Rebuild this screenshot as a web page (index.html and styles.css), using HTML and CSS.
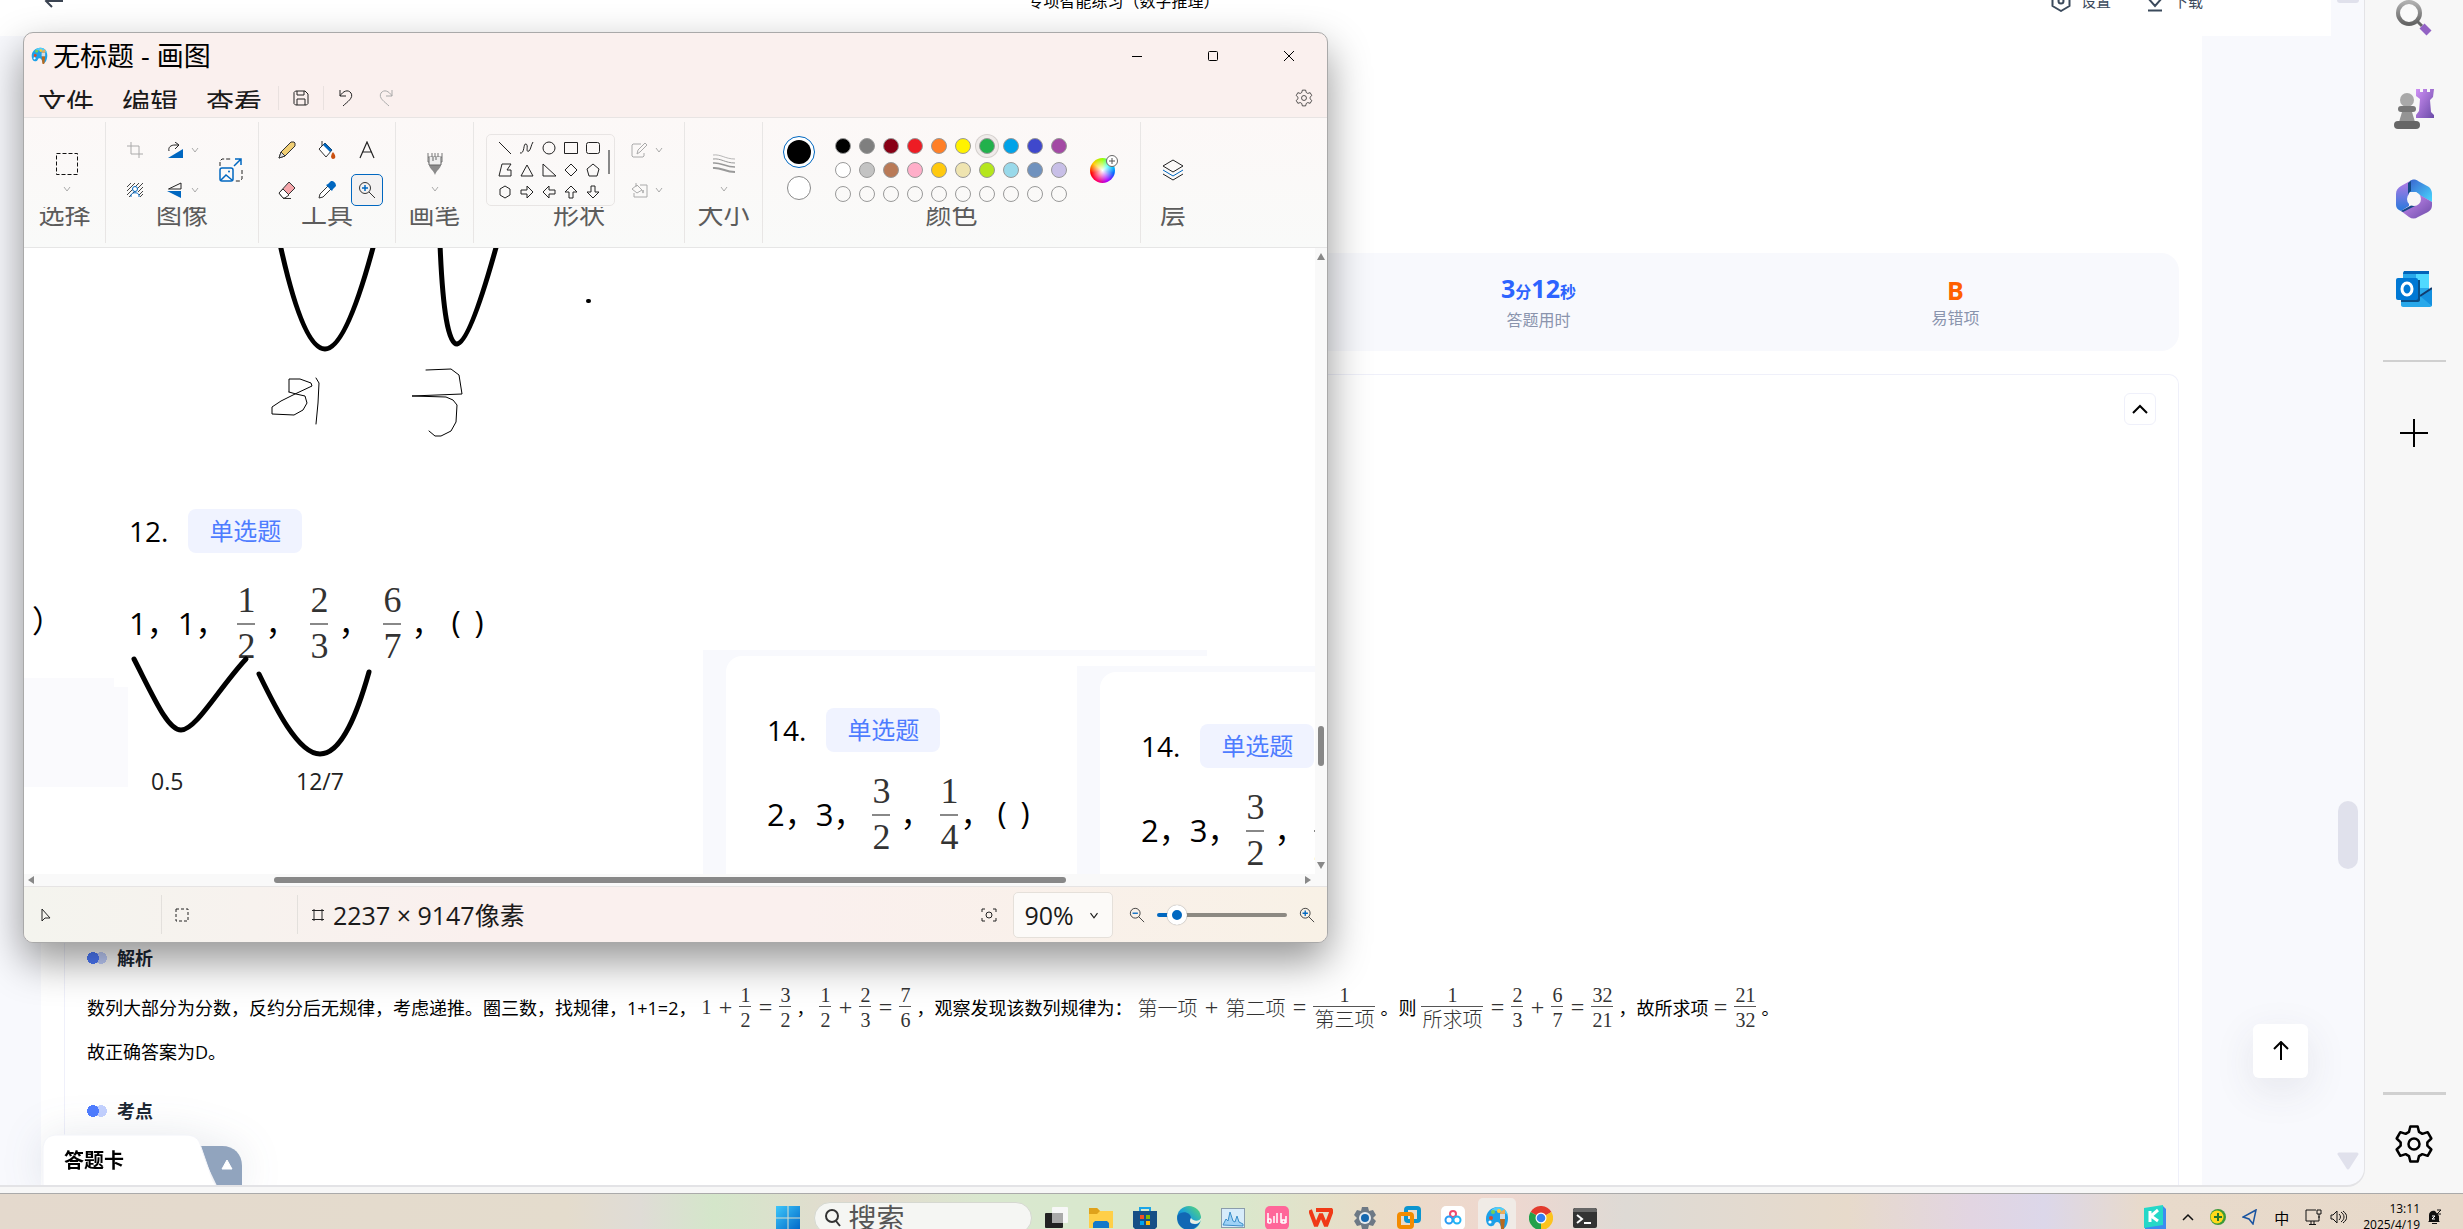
FILE: index.html
```html
<!DOCTYPE html>
<html lang="zh-CN">
<head>
    <meta charset="UTF-8">
    <meta name="viewport" content="width=device-width, initial-scale=1.0">
    <title>专项智能练习（数字推理）</title>
    <link rel="stylesheet" href="styles.css">
</head>
<body>
    <!-- gradients and icons used more than once -->
    <svg class="defs" aria-hidden="true">
        <defs>
            <linearGradient id="gGray" x1="0" y1="0" x2="0" y2="1"><stop offset="0" stop-color="#b0b0b0"/><stop offset="1" stop-color="#636363"/></linearGradient>
            <linearGradient id="gPurple" x1="0" y1="0" x2="1" y2="1"><stop offset="0" stop-color="#cf90f5"/><stop offset="1" stop-color="#6b4ba8"/></linearGradient>
            <linearGradient id="gBlue" x1="0" y1="0" x2="1" y2="1"><stop offset="0" stop-color="#3a64cf"/><stop offset="1" stop-color="#48d8ff"/></linearGradient>
            <linearGradient id="gViolet" x1="0" y1="0" x2="0" y2="1"><stop offset="0" stop-color="#b67be6"/><stop offset="1" stop-color="#2679dc"/></linearGradient>
            <linearGradient id="gWin" x1="0" y1="0" x2="1" y2="1"><stop offset="0" stop-color="#3ec7fa"/><stop offset="1" stop-color="#0067c8"/></linearGradient>
            <linearGradient id="gEdge" x1="0" y1="1" x2="1" y2="0"><stop offset="0" stop-color="#0c59a4"/><stop offset=".5" stop-color="#1ba1d8"/><stop offset="1" stop-color="#5fdc6c"/></linearGradient>
        </defs>
        <symbol id="chev" viewBox="0 0 8 6"><path d="M1 1l3 4 3-4" fill="none" stroke="currentColor"/></symbol>
        <symbol id="palette" viewBox="0 0 24 24">
            <path d="M13 1C6 1 1 6 1 13c0 5 3 8 6 7 3 0 2-4 5-4 4 0 3 6 6 7 3-1 5-6 5-11 0-6-4-11-10-11z" fill="#1ca0e8"/>
            <path d="M13 1c5 0 9 3 10 8-4-3-10-5-17-4 2-3 4-4 7-4z" fill="#54cdf7"/>
            <circle cx="6" cy="12" r="2" fill="#d84a2b"/><circle cx="8" cy="6" r="2" fill="#73cf55"/><circle cx="14" cy="5" r="2" fill="#ffc83a"/><circle cx="5" cy="16" r="1.600" fill="#fff"/>
            <path d="M15 13h5l-1 10c-1 2-3 1-3 0z" fill="#b86a20"/><path d="M15 8h5v5h-5z" fill="#d7dde2"/><path d="M15 8c0-3 4-4 5-5v5z" fill="#ecab5a"/>
        </symbol>
        <symbol id="gear" viewBox="0 0 24 24">
            <path d="M9.800 1.500h4.400l.8 3.200 2 1.200 3.200-1 2.200 3.800-2.400 2.300v2l2.400 2.300-2.200 3.800-3.200-1-2 1.200-.8 3.200H9.800L9 19.300l-2-1.200-3.200 1-2.200-3.800L4 13v-2L1.600 8.700l2.200-3.800 3.200 1 2-1.200z" fill="none" stroke="currentColor" stroke-linejoin="round"/>
            <circle cx="12" cy="12" r="3.300" fill="none" stroke="currentColor"/>
        </symbol>
        <symbol id="magPlus" viewBox="0 0 18 18"><circle cx="7" cy="7" r="5.500" fill="none" stroke="#333"/><path d="M11 11l6 6" stroke="#333"/><path d="M4 7h6M7 4v6" stroke="#0067c0" stroke-width="1.500"/></symbol>
        <symbol id="magMinus" viewBox="0 0 18 18"><circle cx="7" cy="7" r="5.500" fill="none" stroke="#333"/><path d="M11 11l6 6" stroke="#333"/><path d="M4 7h6" stroke="#0067c0" stroke-width="1.500"/></symbol>
    </svg>

    <div class="browser">
        <main class="page">
            <header class="page-header">
                <div class="header-inner">
                    <a href="#" class="back" aria-label="返回"><svg width="20" height="14" viewBox="0 0 20 14"><path d="M8 1L2 7l6 6M2 7h17" fill="none" stroke="#3b4452" stroke-width="2"/></svg></a>
                    <h1>专项智能练习（数字推理）</h1>
                    <div class="header-tools">
                        <a href="#"><svg width="20" height="22" viewBox="0 0 20 22"><path d="M10 1l8.500 5v10L10 21l-8.500-5V6z" fill="none" stroke="#3b4a5c" stroke-width="2" stroke-linejoin="round"/><circle cx="10" cy="11" r="2.500" fill="none" stroke="#3b4a5c" stroke-width="2"/></svg>设置</a>
                        <a href="#"><svg width="16" height="22" viewBox="0 0 16 22"><path d="M5 2h6v6h4l-7 8-7-8h4zM1 20.500h14" fill="none" stroke="#3b4a5c" stroke-width="2"/></svg>下载</a>
                    </div>
                </div>
            </header>

            <section class="content">
                <div class="stats">
                    <div class="stat stat-time"><strong>3<small>分</small>12<small>秒</small></strong><span>答题用时</span></div>
                    <div class="stat stat-wrong"><strong>B</strong><span>易错项</span></div>
                </div>

                <article class="analysis">
                    <div class="analysis-top">
                        <button class="fold" aria-label="收起"><svg width="16" height="10" viewBox="0 0 16 10"><path d="M1 9l7-7 7 7" fill="none" stroke="#000" stroke-width="2"/></svg></button>
                    </div>
                    <h2><i class="dots"></i>解析</h2>
                    <p class="line">
                        <span>数列大部分为分数，反约分后无规律，考虑递推。圈三数，找规律，1+1=2，</span>
                        <span class="math">1<b>+</b><span class="frac"><i>1</i><i>2</i></span><b>=</b><span class="frac"><i>3</i><i>2</i></span></span>
                        <span>，</span>
                        <span class="math"><span class="frac"><i>1</i><i>2</i></span><b>+</b><span class="frac"><i>2</i><i>3</i></span><b>=</b><span class="frac"><i>7</i><i>6</i></span></span>
                        <span>，观察发现该数列规律为：</span>
                        <span class="math">第一项<b>+</b>第二项<b>=</b><span class="frac"><i>1</i><i>第三项</i></span></span>
                        <span>。则</span>
                        <span class="math"><span class="frac"><i>1</i><i>所求项</i></span><b>=</b><span class="frac"><i>2</i><i>3</i></span><b>+</b><span class="frac"><i>6</i><i>7</i></span><b>=</b><span class="frac"><i>32</i><i>21</i></span></span>
                        <span>，故所求项</span>
                        <span class="math last"><b>=</b><span class="frac"><i>21</i><i>32</i></span></span>
                        <span>。</span>
                    </p>
                    <p class="answer">故正确答案为D。</p>
                    <h2><i class="dots"></i>考点</h2>
                </article>
            </section>

            <button class="sheet">
                <svg width="202" height="54" viewBox="0 0 202 54"><path d="M156 12h24c12 0 20 8 20 20v22h-24z" fill="#91a4be"/><path d="M1 54V16C1 6 6 1 15 1h128c10 0 14 4 16 12l10 29c3 8 5 10 9 12z" fill="#fff" stroke="#f3f4f9"/><path d="M185 26l5 9h-10z" fill="#fff" stroke="#fff" stroke-linejoin="round"/></svg>
                <span>答题卡</span>
            </button>
            <button class="to-top" aria-label="回到顶部"><svg width="16" height="20" viewBox="0 0 16 20"><path d="M8 19V2M1 8l7-7 7 7" fill="none" stroke="#000" stroke-width="2"/></svg></button>
            <div class="page-scroll"><i class="cap"></i><i class="thumb"></i><svg width="22" height="18" viewBox="0 0 22 18"><path d="M2 2h18l-9 14z" fill="#e0e1ec" stroke="#e0e1ec" stroke-width="3" stroke-linejoin="round"/></svg></div>
        </main>

        <aside class="sidebar">
            <button aria-label="搜索"><svg width="38" height="40" viewBox="0 0 38 40"><circle cx="14" cy="14" r="11" fill="#fafafa" stroke="url(#gGray)" stroke-width="4"/><path d="M22 22l5 5" stroke="#666" stroke-width="3"/><path d="M27 27l7 7" stroke="#9262c4" stroke-width="7"/></svg></button>
            <button aria-label="游戏"><svg width="40" height="40" viewBox="0 0 40 40"><path d="M22 0h4v3h3V0h4v3h3V0h4l-1 8-3 3 1 12 3 3v3H22v-3l3-4 1-12-4-3z" fill="url(#gPurple)"/><circle cx="13" cy="11" r="7" fill="#a9a9a9"/><rect x="4" y="17" width="18" height="6" rx="3" fill="#777"/><path d="M8 23h10l3 10H5z" fill="#949494"/><rect y="32" width="26" height="8" rx="4" fill="#666"/></svg></button>
            <button aria-label="Microsoft 365"><svg width="36" height="40" viewBox="0 0 36 40"><path d="M14 2l-9 5c-3 2-5 4-5 8v11c0 3 2 5 5 6l8-5V8z" fill="url(#gViolet)"/><path d="M14 2c2-2 6-2 8 0l11 6c2 2 3 4 3 7v8L25 17l-5-4h-7V4z" fill="url(#gBlue)"/><path d="M5 32l13-7 6-9 12 7v3c0 3-1 5-4 7l-10 5c-3 2-6 2-9 0z" fill="url(#gPurple)"/><path d="M12 4l3-2v10l-3 3zM5 32l11-6 3 1-12 6z" fill="#144a86"/><circle cx="18" cy="20" r="7" fill="#f7f7f7"/></svg></button>
            <button aria-label="Outlook"><svg width="36" height="36" viewBox="0 0 36 36"><path d="M7 2c0-1 1-2 2-2h22c1 0 2 1 2 2v16l3 2v14c0 1-1 2-2 2H7c-1 0-2-1-2-2V8h2z" fill="#28a8ea"/><path d="M8 0h25v3H7z" fill="#0364b8"/><path d="M20 3h13v14H20z" fill="#50d9ff"/><path d="M24 25l12-8v18z" fill="#1490df"/><path d="M24 25l12-8" stroke="#123b6d" stroke-width="2"/><path d="M4 9h20v20c0 1-1 2-2 2H5z" fill="#0a4f87"/><rect y="7" width="22" height="22" rx="2" fill="#0078d4"/><ellipse cx="11" cy="18" rx="5" ry="6" fill="none" stroke="#fff" stroke-width="3"/></svg></button>
            <hr>
            <button aria-label="添加"><svg width="28" height="28" viewBox="0 0 28 28"><path d="M14 0v28M0 14h28" stroke="#000" stroke-width="2"/></svg></button>
            <hr class="low">
            <button class="settings" aria-label="设置"><svg width="40" height="40"><use href="#gear"/></svg></button>
        </aside>
    </div>

    <section class="paint">
        <div class="titlebar">
            <svg width="17" height="17"><use href="#palette"/></svg>
            <span class="win-title">无标题 - 画图</span>
            <div class="win-buttons">
                <button aria-label="最小化"><svg width="12" height="12"><path d="M1 6.500h10" stroke="#000"/></svg></button>
                <button aria-label="最大化"><svg width="12" height="12"><rect x="1.500" y="1.500" width="9" height="9" rx="1" fill="none" stroke="#000"/></svg></button>
                <button aria-label="关闭"><svg width="12" height="12"><path d="M1 1l10 10M11 1L1 11" stroke="#000"/></svg></button>
            </div>
        </div>
        <nav class="menubar">
            <button class="menu">文件</button>
            <button class="menu">编辑</button>
            <button class="menu">查看</button>
            <button class="quick bar" aria-label="保存"><svg width="16" height="16" viewBox="0 0 16 16"><path d="M1 2.500L2.500 1H12l3 3v9.500L13.500 15h-11L1 13.500zM4 1v4h7V1M4 15V9h8v6" fill="none" stroke="#222"/></svg></button>
            <button class="quick bar" aria-label="撤消"><svg width="16" height="18" viewBox="0 0 16 18"><path d="M2 1v6h6M2 7c3-5 8-7 11-3 3 5-4 9-8 13" fill="none" stroke="#222"/></svg></button>
            <button class="quick" aria-label="重做"><svg width="16" height="18" viewBox="0 0 16 18"><path d="M14 1v6H8M14 7C11 2 6 0 3 4c-3 5 4 9 8 13" fill="none" stroke="#aaa"/></svg></button>
            <button class="quick cog" aria-label="设置"><svg width="18" height="18"><use href="#gear"/></svg></button>
        </nav>

        <div class="ribbon">
            <div class="group g-select">
                <div class="tools col">
                    <button aria-label="选择"><svg width="24" height="24"><rect x="1.500" y="1.500" width="21" height="21" fill="none" stroke="#111" stroke-dasharray="4 2"/></svg></button>
                    <svg class="chev" width="8" height="6"><use href="#chev"/></svg>
                </div>
                <span class="label">选择</span>
            </div>
            <div class="group g-image">
                <div class="tools">
                    <div class="pad3">
                        <button aria-label="裁剪"><svg width="16" height="16" viewBox="0 0 16 16"><path d="M4 0v12h12M0 4h12v12" fill="none" stroke="#aaa"/></svg></button>
                        <button aria-label="旋转"><svg width="16" height="16" viewBox="0 0 16 16"><path d="M16 7v9H1z" fill="#0067c0"/><path d="M2 9c-1-4 2-6 6-6h3M8 0l4 3-4 4" fill="none" stroke="#222"/></svg></button>
                        <svg class="chev" width="8" height="6"><use href="#chev"/></svg>
                        <button aria-label="删除背景"><svg width="16" height="14" viewBox="0 0 16 14"><path d="M0 4l4-4M0 8l8-8M0 12L12 0M2 14L16 0M11 9l5-5M12 12l4-4M13 14l3-3" stroke="#444"/><circle cx="8" cy="6" r="2.500" fill="#fff" stroke="#0067c0"/><path d="M4 14v-2c1-3 7-3 8 0v2" fill="#fff" stroke="#0067c0"/></svg></button>
                        <button aria-label="翻转"><svg width="16" height="16" viewBox="0 0 16 16"><path d="M1.500 7L14 1v6z" fill="none" stroke="#222"/><path d="M0 9h14v7z" fill="#0067c0"/></svg></button>
                        <svg class="chev" width="8" height="6"><use href="#chev"/></svg>
                    </div>
                    <button aria-label="重设大小"><svg width="24" height="24" viewBox="0 0 24 24"><path d="M1 8V3l2-2h9M23 12v9l-2 2h-6" fill="none" stroke="#222" stroke-dasharray="4 2"/><rect x="1" y="10" width="13" height="13" rx="2" fill="none" stroke="#0067c0" stroke-width="1.500"/><path d="M2 22l5-5 6 5M15 8l7-7M16 1h6v6" fill="none" stroke="#0067c0" stroke-width="1.500"/><circle cx="10" cy="13.500" r="1" fill="#0067c0"/></svg></button>
                </div>
                <span class="label">图像</span>
            </div>
            <div class="group g-tools">
                <div class="tools">
                    <div class="pad">
                        <button aria-label="铅笔"><svg width="18" height="18" viewBox="0 0 18 18"><path d="M1 17l2-6L13 1h3l1 1v3L7 15z" fill="#f1cf74" stroke="#333"/><path d="M1 17l2-6 4 4z" fill="#ddd" stroke="#333"/></svg></button>
                        <button aria-label="填充"><svg width="18" height="18" viewBox="0 0 18 18"><path d="M7 2l7 7-6 7-7-8z" fill="#fff" stroke="#333"/><path d="M7 2l7 7-2 2-7-7z" fill="#0067c0"/><path d="M4 5V0" stroke="#333"/><path d="M15 11c4 5 2 7 0 7s-3-3 0-7z" fill="#ca5010"/></svg></button>
                        <button aria-label="文本"><svg width="16" height="18" viewBox="0 0 16 18"><path d="M1 17L8 1l7 16M3 11h10" fill="none" stroke="#222" stroke-width="1.200"/></svg></button>
                        <button aria-label="橡皮擦"><svg width="18" height="18" viewBox="0 0 18 18"><path d="M1 12L11 1l6 6L7 17H5z" fill="#f6a6ab" stroke="#333"/><path d="M1 12l4-4 6 6-4 3H5z" fill="#fff" stroke="#333"/><path d="M5 17.500h8" stroke="#333"/></svg></button>
                        <button aria-label="取色器"><svg width="18" height="18" viewBox="0 0 18 18"><path d="M1 17l1-4 8-8 3 3-8 8z" fill="#fff" stroke="#333"/><path d="M8 4l2-1 3-3c3 0 5 2 5 5l-3 3-1 2z" fill="#0067c0"/></svg></button>
                        <button class="on" aria-label="放大镜"><svg width="18" height="18"><use href="#magPlus"/></svg></button>
                    </div>
                </div>
                <span class="label">工具</span>
            </div>
            <div class="group g-brush">
                <div class="tools col">
                    <button aria-label="画笔"><svg width="16" height="24" viewBox="0 0 16 24"><path d="M1 1v9h14V1M1 5h14M5 1v7M8 1v5M11 1v7" fill="none" stroke="#777"/><path d="M2 12h12c0 5-4 5-6 11-2-6-6-6-6-11z" fill="#8b8b8b"/><path d="M2 5v8h12V5" fill="#eee" stroke="#666"/><path d="M6 5v4M9 5v3" stroke="#666"/></svg></button>
                    <svg class="chev" width="8" height="6"><use href="#chev"/></svg>
                </div>
                <span class="label">画笔</span>
            </div>
            <div class="group g-shapes">
                <div class="tools">
                    <div class="gallery">
                        <svg viewBox="0 0 14 14"><path d="M1 1l12 12"/></svg>
                        <svg viewBox="0 0 14 14"><path d="M0 12c5 1 3-10 6-9s-1 9 3 7c2-2 2-6 4-9"/></svg>
                        <svg viewBox="0 0 14 14"><circle cx="7" cy="7" r="6"/></svg>
                        <svg viewBox="0 0 14 14"><path d="M.5 1.500h13v11H.5z"/></svg>
                        <svg viewBox="0 0 14 14"><rect x=".5" y="1.500" width="13" height="11" rx="2"/></svg>
                        <svg viewBox="0 0 14 14"><path d="M4 1h9L9 7h4v6H1z"/></svg>
                        <svg viewBox="0 0 14 14"><path d="M7 2l6 11H1z"/></svg>
                        <svg viewBox="0 0 14 14"><path d="M1 1v12h13z"/></svg>
                        <svg viewBox="0 0 14 14"><path d="M7 1l6 6-6 6-6-6z"/></svg>
                        <svg viewBox="0 0 14 14"><path d="M7 1l6 5-2 7H3L1 6z"/></svg>
                        <svg viewBox="0 0 14 14"><path d="M7 1l5 3v6l-5 3-5-3V4z"/></svg>
                        <svg viewBox="0 0 14 14"><path d="M1 5h6V1l6 6-6 6V9H1z"/></svg>
                        <svg viewBox="0 0 14 14"><path d="M13 5H7V1L1 7l6 6V9h6z"/></svg>
                        <svg viewBox="0 0 14 14"><path d="M5 13V7H1l6-6 6 6H9v6z"/></svg>
                        <svg viewBox="0 0 14 14"><path d="M5 1v6H1l6 6 6-6H9V1z"/></svg>
                        <i class="bar"></i>
                    </div>
                    <div class="pad2">
                        <button aria-label="轮廓"><svg width="17" height="16" viewBox="0 0 17 16"><path d="M10 2H2L1 3v11l1 1h10l1-1v-3M6 12l1-4 7-7 2 2-7 7z" fill="none" stroke="#aaa"/></svg></button>
                        <svg class="chev" width="8" height="6"><use href="#chev"/></svg>
                        <button aria-label="填充"><svg width="17" height="16" viewBox="0 0 17 16"><path d="M9 3h7v12H3v-4M5 1v4M1 7l5-4 5 5-5 3zM12 8c2 4-2 4 0 0" fill="none" stroke="#aaa"/></svg></button>
                        <svg class="chev" width="8" height="6"><use href="#chev"/></svg>
                    </div>
                </div>
                <span class="label">形状</span>
            </div>
            <div class="group g-size">
                <div class="tools col">
                    <button aria-label="大小"><svg width="24" height="24" viewBox="0 0 24 20"><g fill="none" stroke="#999"><path d="M1 1c8-1 12 4 22 4" stroke-width=".7"/><path d="M1 5c8-1 12 4 22 4"/><path d="M1 9c8-1 12 4 22 4" stroke-width="1.500"/><path d="M1 14c8-1 12 4 22 4" stroke-width="2"/></g></svg></button>
                    <svg class="chev" width="8" height="6"><use href="#chev"/></svg>
                </div>
                <span class="label">大小</span>
            </div>
            <div class="group g-colors">
                <div class="tools">
                    <div class="current"><button class="fore" aria-label="颜色 1"><i></i></button><button class="back-color" aria-label="颜色 2"></button></div>
                    <div class="swatches">
                        <i class="c1"></i><i class="c2"></i><i class="c3"></i><i class="c4"></i><i class="c5"></i><i class="c6"></i><i class="c7"></i><i class="c8"></i><i class="c9"></i><i class="c10"></i>
                        <i class="c11"></i><i class="c12"></i><i class="c13"></i><i class="c14"></i><i class="c15"></i><i class="c16"></i><i class="c17"></i><i class="c18"></i><i class="c19"></i><i class="c20"></i>
                        <i></i><i></i><i></i><i></i><i></i><i></i><i></i><i></i><i></i><i></i>
                    </div>
                    <button class="wheel" aria-label="编辑颜色"><svg width="12" height="12"><circle cx="6" cy="6" r="5.500" fill="#fff" stroke="#666"/><path d="M3 6h6M6 3v6" stroke="#555"/></svg></button>
                </div>
                <span class="label">颜色</span>
            </div>
            <div class="group g-layer">
                <div class="tools"><button aria-label="层"><svg width="22" height="22" viewBox="0 0 22 22"><path d="M11 1l10 6-10 6L1 7z" fill="none" stroke="#222"/><path d="M1 11l10 6 10-6" fill="none" stroke="#0067c0"/><path d="M1 15l10 6 10-6" fill="none" stroke="#222"/></svg></button></div>
                <span class="label">层</span>
            </div>
        </div>

        <div class="work">
            <div class="canvas">
                <div class="patch p1"></div>
                <div class="patch p2"></div>
                <div class="item sum s-left">）</div>
                <div class="item q12">
                    <div class="q-head">12.<span>单选题</span></div>
                    <div class="sum">1，1，<span class="frac"><i>1</i><i>2</i></span><u>，</u><span class="frac"><i>2</i><i>3</i></span><u>，</u><span class="frac"><i>6</i><i>7</i></span><u>，</u><span class="blank"><i>(</i><i>)</i></span></div>
                </div>
                <div class="item snip snip-a">
                    <div class="snip-in">
                        <div class="q-head">14.<span>单选题</span></div>
                        <div class="sum">2，3，<span class="frac"><i>3</i><i>2</i></span><u>，</u><span class="frac near"><i>1</i><i>4</i></span>，<span class="blank"><i>(</i><i>)</i></span></div>
                    </div>
                </div>
                <div class="item snip snip-b">
                    <div class="snip-in">
                        <div class="q-head">14.<span>单选题</span></div>
                        <div class="sum">2，3，<span class="frac"><i>3</i><i>2</i></span><u>，</u><span class="frac near"><i>1</i><i>4</i></span>，<span class="blank"><i>(</i><i>)</i></span></div>
                    </div>
                </div>
                <div class="item note n1">0.5</div>
                <div class="item note n2">12/7</div>
                <svg class="strokes" width="620" height="540" viewBox="24 248 620 540" fill="none" stroke="#000" stroke-linecap="round" stroke-linejoin="round">
                    <g stroke-width="5">
                        <path d="M280 244Q303 349 325 349Q346 349 374 244"/>
                        <path d="M440 244Q444 344 457 344Q470 342 497 244"/>
                        <path d="M134 659C155 700 168 730 181 730C196 730 219 688 246 659"/>
                        <path d="M259 674C275 707 298 754 320 754C342 754 358 711 369 672"/>
                    </g>
                    <path d="M588 301h1" stroke-width="4"/>
                    <path d="M289 392v-13l11 0 11 4 1 3-17 8-14 7-9 6v7l22 1 9-5 4-7-2-7-9-2-7-2M316 378l3 5-1 20-2 21"/>
                    <path d="M426 370l25-1 8 6 3 19-50 2 34 1 7 3 4 5-1 17-5 9-10 5-6 0-6-5"/>
                </svg>
            </div>
            <div class="vbar"><svg width="8" height="7"><path d="M4 0l4 7H0z" fill="#888"/></svg><i></i><svg width="8" height="7"><path d="M4 7l4-7H0z" fill="#888"/></svg></div>
            <div class="hbar"><svg width="7" height="8"><path d="M0 4l6-4v8z" fill="#888"/></svg><i></i><svg width="7" height="8"><path d="M7 4L1 0v8z" fill="#888"/></svg></div>
        </div>

        <footer class="status">
            <div class="cell pos"><svg width="10" height="14" viewBox="0 0 10 14"><path d="M1 1v12l3-3h5z" fill="none" stroke="#222"/></svg></div>
            <div class="cell sel"><svg width="14" height="14"><rect x="1" y="1" width="12" height="12" fill="none" stroke="#222" stroke-dasharray="3 2"/></svg></div>
            <div class="cell dim"><svg width="14" height="14"><path d="M3 1v12M11 1v12M1 2.500h12M1 11.500h12" stroke="#222"/></svg>2237 × 9147像素</div>
            <div class="zoom">
                <button aria-label="适应窗口"><svg width="16" height="14" viewBox="0 0 16 14"><path d="M1 4V1h3M12 1h3v3M15 10v3h-3M4 13H1v-3" fill="none" stroke="#222"/><circle cx="8" cy="7" r="3" fill="none" stroke="#222"/></svg></button>
                <div class="pick"><select aria-label="缩放"><option>90%</option><option>100%</option></select><svg width="10" height="7"><use href="#chev"/></svg></div>
                <button aria-label="缩小"><svg width="16" height="16"><use href="#magMinus"/></svg></button>
                <input type="range" min="0" max="100" value="9" aria-label="缩放级别">
                <button aria-label="放大"><svg width="16" height="16"><use href="#magPlus"/></svg></button>
            </div>
        </footer>
    </section>

    <footer class="taskbar">
        <div class="apps">
            <button aria-label="开始"><svg width="24" height="24" viewBox="0 0 24 24"><path d="M0 0h11.500v11.500H0zM12.500 0H24v11.500H12.500zM0 12.500h11.500V24H0zM12.500 12.500H24V24H12.500z" fill="url(#gWin)"/></svg></button>
            <label class="search"><svg width="16" height="18" viewBox="0 0 16 18"><circle cx="7" cy="7" r="6" fill="none" stroke="#333" stroke-width="2"/><path d="M11 12l4 5" stroke="#333" stroke-width="2"/></svg><input type="text" placeholder="搜索" aria-label="搜索"></label>
            <button aria-label="任务视图"><svg width="24" height="24" viewBox="0 0 24 24"><rect x="7" y="1" width="16" height="16" rx="1" fill="#f7f7f7"/><rect x="0" y="7" width="18" height="15" rx="1" fill="#222"/><path d="M7 7h11v10H7z" fill="#aaa"/></svg></button>
            <button aria-label="资源管理器"><svg width="24" height="24" viewBox="0 0 24 24"><path d="M0 2h8l3 3h13v17H0z" fill="#ffcf48"/><path d="M0 2h8l3 3-3 3H0z" fill="#dfa21b"/><path d="M4 22v-5l2-2h12l2 2v5z" fill="#1479c9"/></svg></button>
            <button aria-label="应用商店"><svg width="24" height="24" viewBox="0 0 24 24"><path d="M7 6V2h10v4" fill="none" stroke="#1aa5e8" stroke-width="2"/><path d="M0 5h24v16l-2 2H2l-2-2z" fill="#164f86"/><path d="M7 9h4v4H7z" fill="#f25022"/><path d="M13 9h4v4h-4z" fill="#7fba00"/><path d="M7 15h4v4H7z" fill="#00a4ef"/><path d="M13 15h4v4h-4z" fill="#ffb900"/></svg></button>
            <button aria-label="Edge"><svg width="24" height="24" viewBox="0 0 24 24"><circle cx="12" cy="12" r="12" fill="url(#gEdge)"/><path d="M1 9c4-5 13-3 13 3-2 3-1 5 3 6 3 1 5-1 6-2-4 8-13 9-18 5C1 17 0 13 1 9z" fill="#1267b4"/><path d="M14 12c-2 3-1 6 4 6 3 0 5-2 6-4V12c-1 3-7 4-10 0z" fill="#e8eee4"/></svg></button>
            <button aria-label="监视器"><svg width="24" height="20" viewBox="0 0 24 20"><rect x=".5" y=".5" width="23" height="19" fill="#d7ecfa" stroke="#8a9cac"/><path d="M2 17l3-6 2 2 2-9 3 9 2 1 2-6 2 6 4 2v2z" fill="#9fd2f6" stroke="#3c8fc9"/></svg></button>
            <button aria-label="bilibili"><svg width="24" height="24" viewBox="0 0 24 24"><rect width="24" height="24" rx="5" fill="#ff6699"/><path d="M3 7v10M9 10v7M12 7v10M16 7v10M21 10v7" stroke="#fff" stroke-width="1.500"/><rect x="3" y="13" width="3" height="4" rx="1" fill="none" stroke="#fff" stroke-width="1.500"/><path d="M17 14h3v3h-3z" fill="none" stroke="#fff" stroke-width="1.500"/></svg></button>
            <button aria-label="WPS"><svg width="24" height="20" viewBox="0 0 24 20"><path d="M1 2l6 16 5-12 5 12 6-16H7" fill="none" stroke="#f03a17" stroke-width="4" stroke-linejoin="bevel"/></svg></button>
            <button aria-label="设置"><svg width="24" height="24" viewBox="0 0 24 24"><path d="M9 1h6l1 4 4-1 3 5-3 3 3 3-3 5-4-1-1 4H9l-1-4-4 1-3-5 3-3-3-3 3-5 4 1z" fill="#6d7985"/><circle cx="12" cy="12" r="6" fill="#e7ebef"/><circle cx="12" cy="12" r="4" fill="#1568b0"/></svg></button>
            <button aria-label="虚拟机"><svg width="24" height="24" viewBox="0 0 24 24"><rect x="9" y="2" width="13" height="13" rx="2" fill="none" stroke="#0c95d0" stroke-width="4"/><rect x="2" y="8" width="13" height="13" rx="2" fill="none" stroke="#f38b00" stroke-width="4"/></svg></button>
            <button aria-label="网盘"><svg width="24" height="24" viewBox="0 0 24 24"><rect width="24" height="24" rx="5" fill="#fff"/><circle cx="12" cy="8" r="3" fill="none" stroke="#f0496c" stroke-width="2"/><circle cx="8" cy="14" r="3.500" fill="none" stroke="#2a9cf4" stroke-width="2"/><circle cx="16" cy="14" r="3.500" fill="none" stroke="#1fb3f4" stroke-width="2"/></svg></button>
            <button class="active" aria-label="画图"><svg width="24" height="24"><use href="#palette"/></svg></button>
            <button aria-label="Chrome"><svg width="24" height="24" viewBox="0 0 24 24"><path d="M12 12L1.600 6A12 12 0 0 1 22.400 6z" fill="#e33b2e"/><path d="M12 12l10.400-6A12 12 0 0 1 12 24z" fill="#fcc31e"/><path d="M12 12v12A12 12 0 0 1 1.600 6z" fill="#23a14b"/><circle cx="12" cy="12" r="5.500" fill="#fff"/><circle cx="12" cy="12" r="4.300" fill="#347ff0"/></svg></button>
            <button aria-label="终端"><svg width="24" height="20" viewBox="0 0 24 20"><rect width="24" height="20" rx="2" fill="#333"/><path d="M0 2l2-2h20l2 2v2H0z" fill="#666"/><path d="M4 7l5 4-5 4M11 15h7" fill="none" stroke="#fff" stroke-width="2"/></svg></button>
        </div>
        <div class="tray">
            <svg width="22" height="24" viewBox="0 0 22 24"><path d="M1 4l18-3 3 3v20H1z" fill="#3c8cf0"/><path d="M0 3l19-3v20L0 23z" fill="#24d8c8"/><path d="M6 6v11M14 5l-7 6 7 5" fill="none" stroke="#fff" stroke-width="3"/></svg>
            <svg width="12" height="8" viewBox="0 0 12 8"><path d="M1 7l5-5 5 5" fill="none" stroke="#111" stroke-width="1.500"/></svg>
            <svg width="16" height="16" viewBox="0 0 16 16"><circle cx="8" cy="8" r="8" fill="#3b9a3a"/><circle cx="7" cy="8" r="6.500" fill="#ffd91a"/><path d="M8 4v8M4 8h8" stroke="#23762c" stroke-width="2"/></svg>
            <svg width="16" height="16" viewBox="0 0 16 16"><path d="M14 1L1 8l6 2 4 5z" fill="none" stroke="#1a54a0" stroke-width="1.500"/></svg>
            <span class="ime">中</span>
            <svg width="17" height="16" viewBox="0 0 17 16"><path d="M11 1H1v11h13V7M4 15.500h7M6 12v3M9 12v3M12 1h4v4h-4zM14 5v4" fill="none" stroke="#111"/></svg>
            <svg width="17" height="14" viewBox="0 0 17 14"><path d="M1 5h2l4-4v12L3 9H1zM9 4c2 2 2 4 0 6M11 2c4 3 4 7 0 10M13 1c5 4 5 8 0 12" fill="none" stroke="#111"/></svg>
            <time>13:11<br>2025/4/19</time>
            <svg width="14" height="16" viewBox="0 0 14 16"><path d="M1 12V6c0-3 3-5 6-4l4 5v5l1 1H0zM4 14h5v1H4z" fill="#111"/><path d="M9 1h4l-4 4h4" fill="none" stroke="#111"/><path d="M4 7h3l-3 3h3" fill="none" stroke="#fff"/></svg>
        </div>
    </footer>
</body>
</html>
```
FILE: styles.css
```css
* {
    margin: 0;
    padding: 0;
    box-sizing: border-box;
}

body {
    height: 100vh;
    display: flex;
    flex-direction: column;
    overflow: hidden;
    font-family: "Open Sans", "Noto Sans CJK SC", sans-serif;
    background: #f7f7f7;
    color: #000;
}

button {
    background: none;
    border: none;
    font: inherit;
    color: inherit;
    cursor: pointer;
    display: flex;
    align-items: center;
    justify-content: center;
}

a {
    color: inherit;
    text-decoration: none;
}

i {
    font-style: normal;
}

svg {
    display: block;
    flex: none;
}

.defs {
    position: absolute;
    width: 0;
    height: 0;
}

/* browser page */
.browser {
    flex: 1;
    min-height: 0;
    display: flex;
    padding-bottom: 6px;
}

.page {
    flex: 1;
    position: relative;
    display: flex;
    flex-direction: column;
    overflow: hidden;
    background: #f8f9fd;
    border-right: 1px solid #e3e3e6;
    border-bottom: 2px solid #e3e3e6;
    border-bottom-right-radius: 18px;
}

.page-header {
    flex: none;
    height: 70px;
    margin-top: -34px;
    margin-right: 33px;
    background: #fff;
}

.header-inner {
    height: 100%;
    margin: 0 128px 0 44px;
    display: grid;
    grid-template-columns: 1fr auto 1fr;
    align-items: center;
}

.header-inner h1 {
    font-size: 16px;
    line-height: 24px;
    font-weight: 400;
}

.header-tools {
    display: flex;
    justify-content: flex-end;
    gap: 36px;
    font-size: 15px;
    line-height: 24px;
    color: #3b4a5c;
}

.header-tools a {
    display: flex;
    align-items: center;
    gap: 10px;
}

.content {
    flex: 1;
    min-height: 0;
    margin: 0 162px 0 41px;
    padding: 217px 23px 0;
    background: #fff;
    display: flex;
    flex-direction: column;
}

.stats {
    flex: none;
    height: 98px;
    padding: 0 15px;
    border-radius: 18px;
    background: #f8f9fd;
    display: grid;
    grid-template-columns: repeat(5, 1fr);
    align-items: center;
}

.stat {
    text-align: center;
    font-size: 16px;
    line-height: 24px;
    color: #8a94ad;
}

.stat strong {
    display: block;
    font-size: 25px;
    line-height: 32px;
}

.stat small {
    font-size: 16px;
}

.stat-time {
    grid-column: 4;
}

.stat-time strong {
    color: #2d64ff;
}

.stat-wrong strong {
    color: #ff6000;
}

.analysis {
    flex: 1;
    margin-top: 23px;
    padding: 0 22px;
    border: 1px solid #eff0fa;
    border-bottom: none;
    border-radius: 10px 10px 0 0;
    white-space: nowrap;
}

.analysis-top {
    height: 569px;
    padding-top: 18px;
    display: flex;
    justify-content: flex-end;
}

.fold {
    width: 32px;
    height: 32px;
    border: 1px solid #eff0fa;
    border-radius: 6px;
}

.analysis h2 {
    display: flex;
    align-items: center;
    gap: 10px;
    margin-bottom: 5px;
    font-size: 18px;
    line-height: 28px;
    color: #1c2733;
}

.dots {
    width: 20px;
    height: 12px;
    background: radial-gradient(circle at 6px 6px, #4e7cff 6px, transparent 6px), radial-gradient(circle at 14px 6px, #c3d1ff 6px, transparent 6px);
}

.line {
    display: flex;
    align-items: center;
    height: 60px;
    font-size: 18px;
}

.math {
    display: flex;
    align-items: center;
    margin: 0 5px;
    font-family: "Liberation Serif", "Noto Sans CJK SC", serif;
    font-size: 20px;
    font-weight: 300;
    color: #333;
}

.math b {
    flex: none;
    width: 28px;
    text-align: center;
    font-size: 24px;
    font-weight: 400;
}

.math.last {
    margin-left: -2px;
}

.frac {
    display: inline-flex;
    flex-direction: column;
    align-items: stretch;
    text-align: center;
}

.math .frac i {
    padding: 0 1px;
    line-height: 26px;
    height: 25px;
}

.frac i:first-child {
    border-bottom: 1px solid #555;
}

.answer {
    margin-bottom: 30px;
    font-size: 18px;
    line-height: 30px;
}

.sheet {
    position: absolute;
    left: 42px;
    bottom: -3px;
    filter: drop-shadow(0 0 20px rgba(60, 70, 110, 0.12));
}

.sheet span {
    position: absolute;
    left: 22px;
    top: 13px;
    font-size: 20px;
    line-height: 28px;
    font-weight: bold;
}

.to-top {
    position: absolute;
    right: 56px;
    bottom: 107px;
    width: 55px;
    height: 54px;
    border-radius: 6px;
    background: #fff;
    box-shadow: 0 12px 40px rgba(60, 60, 90, 0.1);
}

.page-scroll {
    position: absolute;
    right: 5px;
    top: 0;
    bottom: 15px;
    width: 22px;
    display: flex;
    flex-direction: column;
    align-items: center;
    justify-content: space-between;
}

.page-scroll .cap {
    width: 22px;
    height: 3px;
    border-radius: 0 0 6px 6px;
    background: #e0e1ec;
}

.page-scroll .thumb {
    width: 20px;
    height: 68px;
    margin-top: 514px;
    border-radius: 10px;
    background: #e0e1ec;
}

.sidebar {
    width: 98px;
    display: flex;
    flex-direction: column;
    align-items: center;
}

.sidebar button {
    height: 90px;
    flex: none;
}

.sidebar button:first-child {
    height: 91px;
    margin-top: -27px;
}

.sidebar hr {
    width: 63px;
    height: 2px;
    margin: 26px 0;
    border: none;
    background: #d0d0d0;
}

.sidebar hr.low {
    height: 3px;
    margin: auto 0 0;
}

.sidebar .settings {
    height: 98px;
    margin-bottom: -6px;
}

.settings svg {
    stroke-width: 1.5px;
}

/* paint window */
.paint {
    position: absolute;
    left: 23px;
    top: 32px;
    width: 53vw;
    height: 911px;
    display: flex;
    flex-direction: column;
    border: 1px solid #a9a9a9;
    border-radius: 10px;
    overflow: hidden;
    background: #faf0ee;
    box-shadow: 0 18px 42px rgba(0, 0, 0, 0.42);
}

.titlebar {
    flex: none;
    height: 45px;
    padding-left: 7px;
    display: flex;
    align-items: center;
    gap: 5px;
}

.win-title {
    font-size: 27px;
    line-height: 36px;
}

.win-buttons {
    margin-left: auto;
    display: flex;
}

.win-buttons button {
    width: 76px;
    height: 45px;
}

.menubar {
    flex: none;
    height: 40px;
    display: flex;
    align-items: center;
    padding-left: 14px;
    border-bottom: 1px solid #e8e4e3;
}

.menu {
    width: 56px;
    height: 23px;
    margin-right: 28px;
    align-items: flex-start;
    overflow: hidden;
    font-size: 28px;
    line-height: 34px;
    color: #1a1a1a;
}

.menu:nth-child(3) {
    margin-right: 16px;
}

.quick {
    width: 36px;
    height: 24px;
}

.quick.bar {
    width: 45px;
    border-left: 1px solid #e9e1df;
}

.quick.cog {
    margin-left: auto;
    margin-right: 5px;
    color: #222;
}

.ribbon {
    flex: none;
    height: 130px;
    display: flex;
    padding: 4px 0;
    background: linear-gradient(#fcf8f7, #f9faf9);
    border-bottom: 1px solid #e6e6e6;
}

.group {
    display: flex;
    flex-direction: column;
    align-items: center;
    border-right: 1px solid #e8e6e5;
}

.g-select {
    width: 82px;
}

.g-image {
    width: 153px;
}

.g-tools {
    width: 137px;
}

.g-brush {
    width: 78px;
}

.g-shapes {
    width: 211px;
}

.g-size {
    width: 78px;
}

.g-colors {
    width: 378px;
}

.g-layer {
    width: 64px;
    border: none;
}

.tools {
    flex: none;
    width: 100%;
    height: 85px;
    display: flex;
    align-items: center;
    justify-content: center;
    padding-top: 11px;
}

.tools.col {
    flex-direction: column;
    gap: 10px;
    padding-top: 14px;
}

.g-select .col {
    padding-left: 4px;
}

.g-image .tools {
    justify-content: flex-start;
    padding-left: 9px;
}

.g-shapes .tools {
    justify-content: flex-start;
    padding-left: 12px;
}

.g-colors .tools {
    justify-content: flex-start;
    padding-left: 19px;
}

.label {
    height: 34px;
    overflow: hidden;
    font-size: 26px;
    line-height: 15px;
    color: #5c5c5c;
}

.chev {
    color: #aaa;
}

.pad,
.pad2,
.pad3 {
    display: grid;
    grid-auto-rows: 40px;
    align-items: center;
    justify-items: center;
}

.pad {
    grid-template-columns: repeat(3, 40px);
}

.pad2 {
    grid-template-columns: 28px 12px;
    margin-left: 10px;
}

.pad3 {
    grid-template-columns: 40px 40px 14px;
    margin-right: 10px;
}

.pad3 .chev {
    margin-left: -14px;
}

.on {
    width: 32px;
    height: 32px;
    border: 1px solid #0067c0;
    border-radius: 5px;
    background: #f3f1f1;
}

.gallery {
    position: relative;
    width: 129px;
    height: 72px;
    padding: 2px 15px 4px 7px;
    display: grid;
    grid-template-columns: repeat(5, 22px);
    grid-auto-rows: 22px;
    align-items: center;
    justify-items: center;
    border: 1px solid #e8e5e4;
    border-radius: 5px;
}

.gallery svg {
    width: 14px;
    height: 14px;
    fill: none;
    stroke: #222;
}

.gallery .bar {
    position: absolute;
    right: 4px;
    top: 15px;
    width: 2px;
    height: 24px;
    background: #888;
}

.current {
    width: 34px;
    margin-bottom: 5px;
    display: flex;
    flex-direction: column;
    align-items: center;
    gap: 8px;
}

.fore {
    width: 32px;
    height: 32px;
    border: 1px solid #0067c0;
    border-radius: 50%;
    background: #fff;
}

.fore i {
    width: 24px;
    height: 24px;
    border-radius: 50%;
    background: #000;
}

.back-color {
    width: 24px;
    height: 24px;
    border: 1px solid #8a8a8a;
    border-radius: 50%;
    background: #fff;
}

.swatches {
    display: grid;
    grid-template-columns: repeat(10, 24px);
    grid-auto-rows: 24px;
    align-items: center;
    justify-items: center;
    margin: 0 19px 0 15px;
}

.swatches i {
    width: 16px;
    height: 16px;
    border: 1px solid #999;
    border-radius: 50%;
}

.swatches .c1 { background: #000; }
.swatches .c2 { background: #7f7f7f; }
.swatches .c3 { background: #880015; }
.swatches .c4 { background: #ed1c24; }
.swatches .c5 { background: #ff7f27; }
.swatches .c6 { background: #fff200; }
.swatches .c7 { background: #22b14c; box-shadow: 0 0 0 3px #efebe9, 0 0 0 4px #d5d0ce; }
.swatches .c8 { background: #00a2e8; }
.swatches .c9 { background: #3f48cc; }
.swatches .c10 { background: #a349a4; }
.swatches .c11 { background: #fff; }
.swatches .c12 { background: #c3c3c3; }
.swatches .c13 { background: #b97a57; }
.swatches .c14 { background: #ffaec9; }
.swatches .c15 { background: #ffc90e; }
.swatches .c16 { background: #efe4b0; }
.swatches .c17 { background: #b5e61d; }
.swatches .c18 { background: #99d9ea; }
.swatches .c19 { background: #7092be; }
.swatches .c20 { background: #c8bfe7; }

.wheel {
    position: relative;
    width: 25px;
    height: 25px;
    border-radius: 50%;
    background: radial-gradient(#fff, transparent 65%), conic-gradient(#9f0, #0ff, #06f, #a0f, #f06, #f00, #fc0, #9f0);
}

.wheel svg {
    position: absolute;
    right: -3px;
    top: -3px;
}

.work {
    flex: 1;
    min-height: 0;
    display: grid;
    grid-template-columns: 1fr 12px;
    grid-template-rows: 1fr 12px;
    background: #f9f9f9;
}

.canvas {
    position: relative;
    overflow: hidden;
    background: #fff;
}

.item,
.patch,
.strokes {
    position: absolute;
}

.strokes {
    left: 0;
    top: 0;
}

.patch {
    background: #fafafd;
}

.p1 {
    left: 0;
    top: 430px;
    width: 90px;
    height: 109px;
}

.p2 {
    left: 89px;
    top: 439px;
    width: 15px;
    height: 100px;
}

.q-head {
    display: flex;
    align-items: center;
    gap: 20px;
    height: 44px;
    font-size: 28px;
}

.q-head span {
    padding: 0 21px;
    border-radius: 8px;
    background: #f0f3ff;
    font-size: 24px;
    line-height: 44px;
    color: #4e7cff;
}

.sum {
    display: flex;
    align-items: center;
    height: 80px;
    font-size: 31px;
    white-space: pre;
}

.sum u {
    width: 42px;
    padding-left: 8px;
    text-decoration: none;
}

.sum .frac {
    width: 22px;
    margin-left: 6px;
    padding-top: 8px;
    align-items: center;
    font-family: "Liberation Serif", serif;
    font-size: 36px;
    color: #333;
}

.sum .frac i {
    width: 18px;
    height: 46px;
    line-height: 42px;
}

.sum .frac i:first-child {
    border-bottom: 2px solid #888;
}

.blank {
    display: flex;
    gap: 14px;
    margin-left: 6px;
}

.s-left {
    left: 8px;
    top: 330px;
}

.q12 {
    left: 105px;
    top: 261px;
}

.q12 .sum {
    margin-top: 28px;
}

.q12 .sum .frac {
    margin-left: 9px;
}

.snip {
    width: 504px;
    height: 300px;
    padding: 6px 0 0 23px;
    background: #f8f9fd;
}

.snip-in {
    height: 100%;
    padding: 52px 0 0 41px;
    border-top-left-radius: 16px;
    background: #fff;
}

.snip .sum {
    margin-top: 20px;
}

.sum .near {
    margin-left: 4px;
}

.snip-a {
    left: 679px;
    top: 402px;
}

.snip-b {
    left: 1053px;
    top: 418px;
}

.note {
    font-size: 23px;
    line-height: 30px;
    color: #222;
}

.n1 {
    left: 127px;
    top: 518px;
}

.n2 {
    left: 272px;
    top: 518px;
}

.vbar {
    display: flex;
    flex-direction: column;
    align-items: center;
    justify-content: space-between;
    padding: 5px 0;
}

.vbar i {
    width: 6px;
    height: 40px;
    margin-top: 370px;
    border-radius: 3px;
    background: #888;
}

.hbar {
    display: flex;
    align-items: center;
    justify-content: space-between;
    padding: 0 4px;
}

.hbar i {
    width: 792px;
    height: 6px;
    border-radius: 3px;
    background: #888;
}

.status {
    flex: none;
    height: 56px;
    display: flex;
    align-items: center;
    border-top: 1px solid #e6e4e4;
    background: linear-gradient(90deg, #f4f4ee, #faf0ee 35%, #faf0ee 60%, #f8f1e6);
    color: #1a1a1a;
}

.cell {
    height: 39px;
    display: flex;
    align-items: center;
    font-size: 25px;
    line-height: 34px;
}

.pos {
    width: 138px;
    padding-left: 17px;
    border-right: 1px solid #e3e0dc;
}

.sel {
    width: 136px;
    padding-left: 13px;
    border-right: 1px solid #e3e0dc;
}

.dim {
    padding-left: 13px;
    gap: 8px;
}

.zoom {
    margin-left: auto;
    display: flex;
    align-items: center;
    padding-right: 12px;
}

.pick {
    position: relative;
    margin: 0 16px;
}

.pick select {
    width: 100px;
    height: 46px;
    padding-left: 10px;
    appearance: none;
    border: 1px solid #e5e0da;
    border-radius: 5px;
    background: #fcfaf8;
    font-family: inherit;
    font-size: 25px;
    color: #1a1a1a;
}

.pick svg {
    position: absolute;
    right: 14px;
    top: 20px;
}

.zoom input {
    appearance: none;
    width: 130px;
    height: 4px;
    margin: 0 12px;
    border-radius: 2px;
    background: linear-gradient(90deg, #0067c0 12%, #8c8982 12%);
}

.zoom input::-webkit-slider-thumb {
    appearance: none;
    width: 20px;
    height: 20px;
    border: 5px solid #fff;
    border-radius: 50%;
    background: #0067c0;
    box-shadow: 0 0 1px #777;
}

/* taskbar */
.taskbar {
    flex: none;
    height: 36px;
    display: grid;
    grid-template-columns: calc(50% - 466px) auto 1fr;
    border-top: 1px solid #aaa;
    overflow: hidden;
    background: linear-gradient(90deg, #e4d9cd, #e4dccd 23%, #dfdcd6 26%, #d4e6ca 29%, #e5dad0 35%, #d9e8cf 40%, #d9e8cc 50%, #eadcc8 56%, #efd7cf 61%, #dedad5 66%, #e7dacb 75%, #e2d5e2 80%, #dcd7e9 83%, #e8dacb 87%, #e7d9ca);
}

.apps {
    grid-column: 2;
    height: 47px;
    display: flex;
    align-items: center;
}

.apps button {
    width: 38px;
    height: 40px;
    margin: 0 3px;
    border-radius: 5px;
}

.apps .active {
    background: #f0ebe6;
}

.search {
    width: 218px;
    height: 32px;
    margin: 0 3px 0 4px;
    padding-left: 10px;
    display: flex;
    align-items: center;
    gap: 8px;
    overflow: hidden;
    border: 1px solid #d5d8d0;
    border-radius: 16px;
    background: #f5f6f3;
}

.search input {
    width: 170px;
    border: none;
    background: none;
    font-family: inherit;
    font-size: 28px;
}

.search input::placeholder {
    color: #555;
}

.tray {
    height: 46px;
    display: flex;
    align-items: center;
    justify-content: flex-end;
    gap: 16px;
    padding-right: 21px;
}

.tray svg:nth-of-type(5) {
    margin-right: -8px;
}

.ime {
    font-size: 15px;
}

.tray time {
    text-align: right;
    font-size: 12px;
    line-height: 16px;
}

.tray time + svg {
    margin-left: -8px;
}
```
